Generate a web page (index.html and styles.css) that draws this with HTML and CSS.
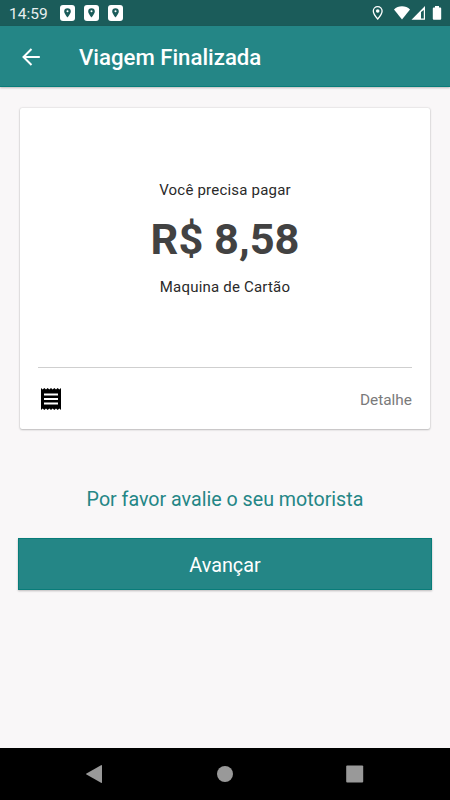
FILE: index.html
```html
<!DOCTYPE html>
<html lang="pt-BR">
<head>
  <meta charset="utf-8">
  <title>Viagem Finalizada</title>
  <meta name="viewport" content="width=device-width, initial-scale=1.0">
  <link rel="stylesheet" href="styles.css">
</head>
<body>
  <div class="status-bar">
    <span class="clock">14:59</span>
    <div class="notifications">
      <svg class="app-icon" viewBox="0 0 15 16"><rect width="15" height="16" rx="3" fill="#fff"/><path fill="#1b5c5a" fill-rule="evenodd" d="M7.500 3.200a3.300 3.300 0 0 0-3.300 3.300c0 2.200 3.300 6 3.300 6s3.300-3.800 3.300-6a3.300 3.300 0 0 0-3.300-3.300zm0 2a1 1 0 1 1 0 2 1 1 0 0 1 0-2z"/></svg>
      <svg class="app-icon" viewBox="0 0 15 16"><rect width="15" height="16" rx="3" fill="#fff"/><path fill="#1b5c5a" fill-rule="evenodd" d="M7.500 3.200a3.300 3.300 0 0 0-3.300 3.300c0 2.200 3.300 6 3.300 6s3.300-3.800 3.300-6a3.300 3.300 0 0 0-3.300-3.300zm0 2a1 1 0 1 1 0 2 1 1 0 0 1 0-2z"/></svg>
      <svg class="app-icon" viewBox="0 0 15 16"><rect width="15" height="16" rx="3" fill="#fff"/><path fill="#1b5c5a" fill-rule="evenodd" d="M7.500 3.200a3.300 3.300 0 0 0-3.300 3.300c0 2.200 3.300 6 3.300 6s3.300-3.800 3.300-6a3.300 3.300 0 0 0-3.300-3.300zm0 2a1 1 0 1 1 0 2 1 1 0 0 1 0-2z"/></svg>
    </div>
    <svg class="system-icons" viewBox="0 0 70 16">
      <!-- location -->
      <path fill="none" stroke="#fff" stroke-width="1.300" d="M5.700 1.600a4.400 4.400 0 0 0-4.400 4.400c0 3.200 4.400 8 4.400 8s4.400-4.800 4.400-8a4.400 4.400 0 0 0-4.400-4.400z"/>
      <circle cx="5.700" cy="6" r="1.800" fill="#fff"/>
      <!-- wifi -->
      <path fill="#fff" d="M22 4.500C26 .1 34 .1 38 4.500l-8 10z"/>
      <!-- signal -->
      <path fill="#fff" fill-rule="evenodd" d="M53 1v13.800H39.500zM51.800 5L49 7v6.500h2.800z"/>
      <!-- battery -->
      <path fill="#fff" d="M63 1h4v1.500h1.200q1 0 1 1v10.300q0 1-1 1h-6.400q-1 0-1-1V3.500q0-1 1-1H63z"/>
    </svg>
  </div>

  <div class="toolbar">
    <svg class="back" viewBox="0 0 18 18"><path fill="none" stroke="#fff" stroke-width="2" d="M17.800 9H1.800M9.500 1L1.500 9l8 8"/></svg>
    <h1>Viagem Finalizada</h1>
  </div>

  <div class="content">
    <div class="card">
      <div class="payment">
        <p class="label">Você precisa pagar</p>
        <p class="amount">R$ 8,58</p>
        <p class="method">Maquina de Cartão</p>
      </div>
      <div class="card-footer">
        <svg class="receipt" viewBox="0 0 20 22">
          <path d="M0 0l1.670 1.500L3.330 0 5 1.500 6.670 0l1.660 1.500L10 0l1.670 1.500L13.330 0 15 1.500 16.670 0l1.660 1.500L20 0v22l-1.670-1.500L16.670 22 15 20.500 13.330 22l-1.660-1.500L10 22l-1.670-1.500L6.670 22 5 20.500 3.330 22l-1.660-1.500L0 22z"/>
          <path fill="#fff" d="M3 5.500h14v2H3zM3 10h14v2H3zM3 14.500h14v2H3z"/>
        </svg>
        <span class="detail">Detalhe</span>
      </div>
    </div>

    <p class="rate">Por favor avalie o seu motorista</p>
    <button class="next">Avançar</button>
  </div>

  <div class="nav-bar">
    <svg viewBox="0 0 18 18"><path fill="#999" d="M15 .2q1-.5 1 .5v16.600q0 1-1 .5L.5 9.600q-1-.6 0-1.200z"/></svg>
    <svg viewBox="0 0 18 18"><circle cx="9" cy="9" r="8" fill="#999"/></svg>
    <svg viewBox="0 0 18 18"><rect x=".2" y=".5" width="17" height="17" rx="1" fill="#999"/></svg>
  </div>
</body>
</html>
```
FILE: styles.css
```css
* {
  box-sizing: border-box;
}
body {
  margin: 0;
  height: 100vh;
  display: flex;
  flex-direction: column;
  overflow: hidden;
  background-color: #f9f7f8;
  font-family: Roboto, sans-serif;
}
h1, p {
  margin: 0;
}
svg {
  display: block;
  flex: none;
}
.status-bar {
  height: 26px;
  flex: none;
  display: flex;
  align-items: center;
  padding: 0 8px 0 9px;
  background-color: #1b5c5a;
  color: #e8efef;
}
.clock {
  width: 51px;
  font-size: 15.500px;
  line-height: 26px;
  padding-top: 2px;
}
.notifications {
  display: flex;
  gap: 9px;
}
.app-icon {
  width: 15px;
  height: 16px;
}
.system-icons {
  width: 70px;
  height: 16px;
  margin-left: auto;
}
.toolbar {
  height: 61px;
  flex: none;
  display: flex;
  align-items: center;
  padding: 2px 22px 0 21.500px;
  background-color: #248686;
  border-bottom: 1px solid #087c79;
  box-shadow: 0 1px 2px rgba(0,0,0,0.25);
  color: white;
}
.back {
  width: 18px;
  height: 18px;
  margin-right: 39.500px;
}
h1 {
  font-size: 22.200px;
  font-weight: 500;
  line-height: 30px;
}
.content {
  flex: 1;
  padding: 21px 18px 0;
  display: flex;
  flex-direction: column;
}
.card {
  height: 321px;
  margin: 0 2px;
  padding: 0 18px;
  background-color: white;
  border-radius: 2px;
  box-shadow: 0 0 2px rgba(0,0,0,0.2), 0 1px 2px rgba(0,0,0,0.2);
}
.payment {
  height: 260px;
  padding-top: 70px;
  border-bottom: 1px solid #cfcfcf;
  text-align: center;
}
.label,
.method {
  font-size: 15px;
  letter-spacing: 0.200px;
  line-height: 24px;
  color: #2a2a2a;
}
.amount {
  font-size: 43.400px;
  font-weight: 700;
  line-height: 52px;
  margin: 12px 0 9px;
  color: #424242;
}
.card-footer {
  height: 61px;
  display: flex;
  align-items: center;
  justify-content: space-between;
  padding: 0 0 0 3px;
}
.receipt {
  width: 20px;
  height: 22px;
}
.detail {
  padding-top: 2px;
  font-size: 15.400px;
  color: #7a7a7a;
}
.rate {
  margin-top: 55px;
  font-size: 19.650px;
  line-height: 32px;
  text-align: center;
  color: #248686;
}
.next {
  height: 52px;
  margin-top: 22px;
  padding: 2px 0 0;
  border: 1px solid #087c79;
  background-color: #248686;
  box-shadow: 0 1px 2px rgba(0,0,0,0.25);
  color: white;
  font-family: inherit;
  font-size: 19.800px;
}
.nav-bar {
  height: 52px;
  flex: none;
  display: flex;
  align-items: center;
  justify-content: space-between;
  padding: 0 86px;
  background-color: black;
}
.nav-bar svg {
  width: 18px;
  height: 18px;
}
```
